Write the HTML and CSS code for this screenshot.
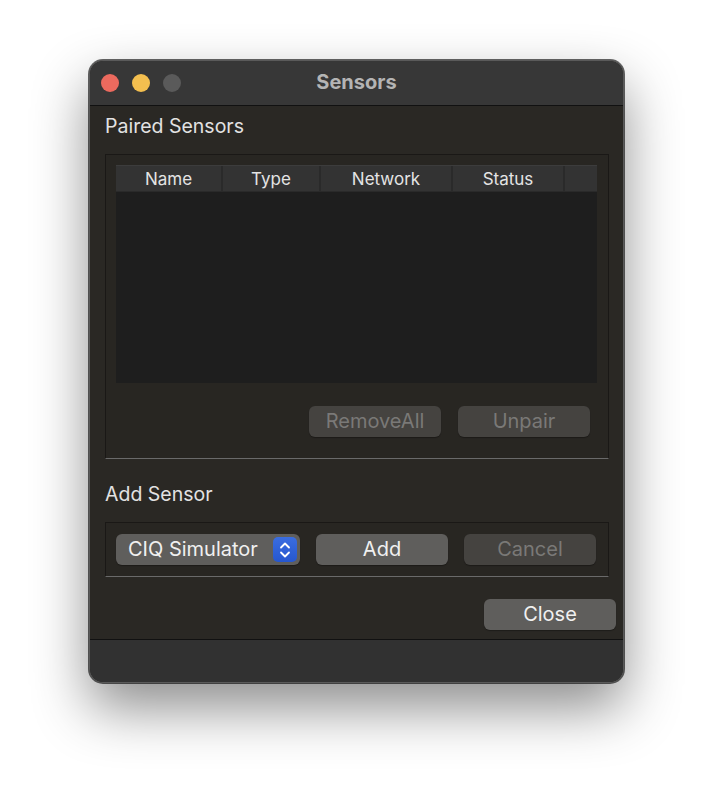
FILE: index.html
```html
<!DOCTYPE html>
<html>
	<head>
		<title>Sensors</title>
		<link rel="stylesheet" href="styles.css">
	</head>
	<body>
		<div class="window">
			<div class="titlebar">
				<div class="lights">
					<span class="light red"></span>
					<span class="light yellow"></span>
					<span class="light gray"></span>
				</div>
				<div class="title">Sensors</div>
			</div>
			<div class="content">
				<div class="label">Paired Sensors</div>
				<div class="group paired">
					<div class="table">
						<div class="thead">
							<div class="th c-name">Name</div>
							<div class="th c-type">Type</div>
							<div class="th c-net">Network</div>
							<div class="th c-status">Status</div>
							<div class="th c-rest"></div>
						</div>
						<div class="tbody"></div>
					</div>
					<div class="row-buttons">
						<button class="btn disabled">RemoveAll</button>
						<button class="btn disabled">Unpair</button>
					</div>
				</div>
				<div class="label add-label">Add Sensor</div>
				<div class="group add">
					<div class="select">
						<span>CIQ Simulator</span>
						<span class="stepper">
							<svg width="12" height="20" viewBox="0 0 12 20">
								<path d="M2 7.5 L6 3.5 L10 7.5" fill="none" stroke="#fff" stroke-width="1.8" stroke-linecap="round" stroke-linejoin="round"/>
								<path d="M2 12.5 L6 16.5 L10 12.5" fill="none" stroke="#fff" stroke-width="1.8" stroke-linecap="round" stroke-linejoin="round"/>
							</svg>
						</span>
					</div>
					<button class="btn">Add</button>
					<button class="btn disabled">Cancel</button>
				</div>
				<div class="footer">
					<button class="btn">Close</button>
				</div>
			</div>
			<div class="bottombar"></div>
		</div>
	</body>
</html>
```
FILE: styles.css
```css
html {
	background: #ffffff;
}
body {
	margin: 0;
	min-height: 800px;
	padding-top: 60px;
	box-sizing: border-box;
	font-family: Inter, "Liberation Sans", sans-serif;
}
.window {
	margin-left: 89px;
	width: 535px;
	height: 623px;
	box-sizing: border-box;
	border: 1px solid #5a5a5a;
	border-radius: 14px;
	overflow: hidden;
	background: #2a2824;
	display: flex;
	flex-direction: column;
	box-shadow: 0 25px 55px rgba(0, 0, 0, 0.45), 0 0 0 1px rgba(0, 0, 0, 0.6);
}
.titlebar {
	height: 44px;
	flex-shrink: 0;
	background: #373737;
	border-bottom: 1px solid #111;
	display: flex;
	align-items: center;
	position: relative;
}
.lights {
	display: flex;
	gap: 13px;
	padding-left: 11px;
}
.light {
	width: 18px;
	height: 18px;
	border-radius: 50%;
}
.red { background: #ec6a5e; }
.yellow { background: #f4bf4f; }
.gray { background: #5a5a5a; }
.title {
	position: absolute;
	left: 0;
	right: 0;
	text-align: center;
	color: #b4b4b4;
	font-weight: bold;
	font-size: 20px;
	top: 9px;
}
.content {
	flex: 1;
	padding: 0 7px 0 15px;
	display: flex;
	flex-direction: column;
}
.label {
	color: #e2e2e2;
	font-size: 19.5px;
	padding-top: 8px;
	height: 48px;
	box-sizing: border-box;
}
.group {
	border: 1px solid #1a1816;
	border-bottom: 1px solid #6a6a6a;
	background: #282622;
	width: 504px;
	box-sizing: border-box;
}
.paired {
	height: 305px;
	padding: 10px 10px 0 10px;
}
.table {
	width: 481px;
	height: 218px;
	background: #1e1e1e;
	display: flex;
	flex-direction: column;
}
.thead {
	display: flex;
	height: 26px;
	background: #333333;
	border-top: 1px solid #3c3c3c;
}
.th {
	color: #e4e4e4;
	font-size: 17px;
	text-align: center;
	line-height: 26px;
	border-right: 2px solid #2a2a2a;
	border-bottom: 1px solid #2a2a2a;
}
.c-name { width: 105px; }
.c-type { width: 96px; }
.c-net { width: 130px; }
.c-status { width: 110px; }
.c-rest { flex: 1; border-right: none; }
.row-buttons {
	display: flex;
	justify-content: flex-end;
	gap: 17px;
	padding: 23px 8px 0 0;
}
.btn {
	width: 132px;
	height: 31px;
	border: none;
	border-radius: 6px;
	background: #5f5e5c;
	color: #f0f0f0;
	font-family: Inter, "Liberation Sans", sans-serif;
	font-size: 20px;
	padding: 0 0 2px 0;
	box-shadow: 0 1px 1px rgba(0, 0, 0, 0.3);
}
.btn.disabled {
	background: #454340;
	color: #7a7977;
}
.add-label {
	padding-top: 23px;
	height: 63px;
}
.add {
	height: 55px;
	display: flex;
	align-items: center;
	gap: 16px;
	padding: 0 10px;
}
.select {
	width: 184px;
	height: 31px;
	border-radius: 6px;
	background: #5f5e5c;
	color: #f0f0f0;
	font-size: 20px;
	display: flex;
	align-items: center;
	justify-content: space-between;
	padding: 0 3px 2px 12px;
	box-sizing: border-box;
	box-shadow: 0 1px 1px rgba(0, 0, 0, 0.3);
}
.stepper {
	width: 24px;
	height: 25px;
	margin-top: 2px;
	border-radius: 5px;
	background: linear-gradient(#3a6de0, #2657cf);
	display: flex;
	align-items: center;
	justify-content: center;
}
.footer {
	display: flex;
	justify-content: flex-end;
	padding-top: 22px;
}
.bottombar {
	height: 42px;
	flex-shrink: 0;
	margin-top: auto;
	background: #313131;
	border-top: 1px solid #111;
}
```
